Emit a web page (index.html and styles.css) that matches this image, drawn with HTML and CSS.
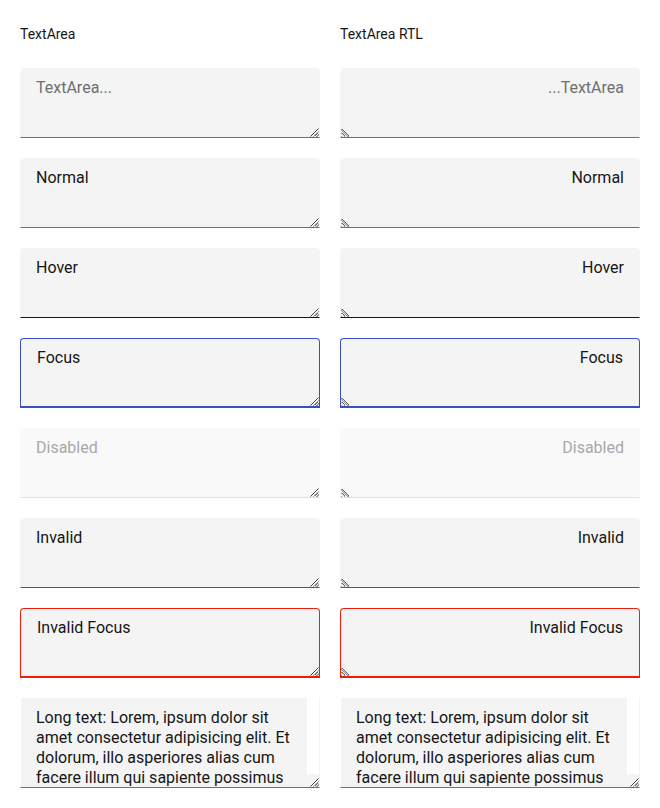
FILE: index.html
```html
<!DOCTYPE html>
<html lang="en">
<head>
<meta charset="utf-8">
<title>TextArea</title>
<link rel="stylesheet" href="styles.css">
</head>
<body>
<main class="page">
  <section class="column">
    <h2 class="label">TextArea</h2>
    <textarea class="ta" placeholder="TextArea..."></textarea>
    <textarea class="ta">Normal</textarea>
    <textarea class="ta is-hover">Hover</textarea>
    <textarea class="ta is-focus">Focus</textarea>
    <textarea class="ta" placeholder="Disabled" disabled></textarea>
    <textarea class="ta is-invalid">Invalid</textarea>
    <textarea class="ta is-invalid-focus">Invalid Focus</textarea>
    <textarea class="ta is-long">Long text: Lorem, ipsum dolor sit amet consectetur adipisicing elit. Et dolorum, illo asperiores alias cum facere illum qui sapiente possimus tempore nisi veniam, modi saepe quam aperiam provident voluptatem.</textarea>
  </section>
  <section class="column">
    <h2 class="label">TextArea RTL</h2>
    <textarea class="ta" dir="rtl" placeholder="TextArea..."></textarea>
    <textarea class="ta" dir="rtl">Normal</textarea>
    <textarea class="ta is-hover" dir="rtl">Hover</textarea>
    <textarea class="ta is-focus" dir="rtl">Focus</textarea>
    <textarea class="ta" dir="rtl" placeholder="Disabled" disabled></textarea>
    <textarea class="ta is-invalid" dir="rtl">Invalid</textarea>
    <textarea class="ta is-invalid-focus" dir="rtl">Invalid Focus</textarea>
    <textarea class="ta is-long">Long text: Lorem, ipsum dolor sit amet consectetur adipisicing elit. Et dolorum, illo asperiores alias cum facere illum qui sapiente possimus tempore nisi veniam, modi saepe quam aperiam provident voluptatem.</textarea>
  </section>
</main>
</body>
</html>
```

FILE: styles.css
```css
* { box-sizing: border-box; }

html, body {
  margin: 0;
  padding: 0;
  background: #ffffff;
}

body {
  font-family: Roboto, "Noto Sans", Arial, sans-serif;
  color: #161616;
}

.page {
  display: grid;
  grid-template-columns: 300px 300px;
  column-gap: 20px;
  padding: 0 20px;
}

.column {
  display: flex;
  flex-direction: column;
  gap: 20px;
}

.label {
  margin: 0;
  padding-top: 26px;
  height: 48px;
  font-size: 14px;
  font-weight: 400;
  line-height: 16px;
  color: #161616;
}

.ta {
  --bg: #f4f4f4;
  display: block;
  width: 300px;
  height: 70px;
  margin: 0;
  padding: 9px 15px 8px 15px;
  font-family: Roboto, "Noto Sans", Arial, sans-serif;
  font-size: 16px;
  line-height: 20px;
  color: #161616;
  background:
    linear-gradient(to bottom right, var(--bg) 50%, transparent 50%) right bottom / 10px 10px no-repeat,
    repeating-linear-gradient(135deg, #9a9a9a 0 1px, transparent 1px 2.4px) right bottom / 10px 10px no-repeat,
    var(--bg);
  border: 1px solid transparent;
  border-bottom: 1px solid #6f6f6f;
  border-radius: 4px 4px 0 0;
  outline: none;
  resize: vertical;
  overflow: auto;
}

.ta[dir="rtl"] {
  background:
    linear-gradient(to bottom left, var(--bg) 50%, transparent 50%) left bottom / 10px 10px no-repeat,
    repeating-linear-gradient(45deg, #9a9a9a 0 1px, transparent 1px 2.4px) left bottom / 10px 10px no-repeat,
    var(--bg);
}

.ta::placeholder {
  color: #6f6f6f;
  opacity: 1;
}

.ta.is-hover {
  border-bottom-color: #161616;
}

.ta.is-focus {
  border: 1px solid #3b4fc4;
  border-bottom-width: 2px;
  padding-left: 16px;
}

.ta.is-focus[dir="rtl"] {
  padding-left: 15px;
  padding-right: 16px;
}

.ta:disabled {
  --bg: #f9f9f9;
  border-bottom-color: #e0e0e0;
  color: #a8a8a8;
}

.ta:disabled::placeholder {
  color: #a8a8a8;
}

.ta.is-invalid {
  border-bottom-color: #ef1d0c;
}

.ta.is-invalid-focus {
  border: 1px solid #ef1d0c;
  border-bottom-width: 2px;
  padding-left: 16px;
}

.ta.is-invalid-focus[dir="rtl"] {
  padding-left: 15px;
  padding-right: 16px;
}

.ta.is-long {
  height: 90px;
  padding-right: 27px;
  border-radius: 4px 0 0 0;
  background:
    linear-gradient(to bottom right, #f4f4f4 50%, transparent 50%) right bottom / 10px 10px no-repeat,
    repeating-linear-gradient(135deg, #9a9a9a 0 1px, transparent 1px 2.4px) right bottom / 10px 10px no-repeat,
    linear-gradient(#f4f4f4, #f4f4f4) right bottom / 12px 13px no-repeat,
    linear-gradient(to left, #ffffff 12px, #f4f4f4 12px);
}
```
